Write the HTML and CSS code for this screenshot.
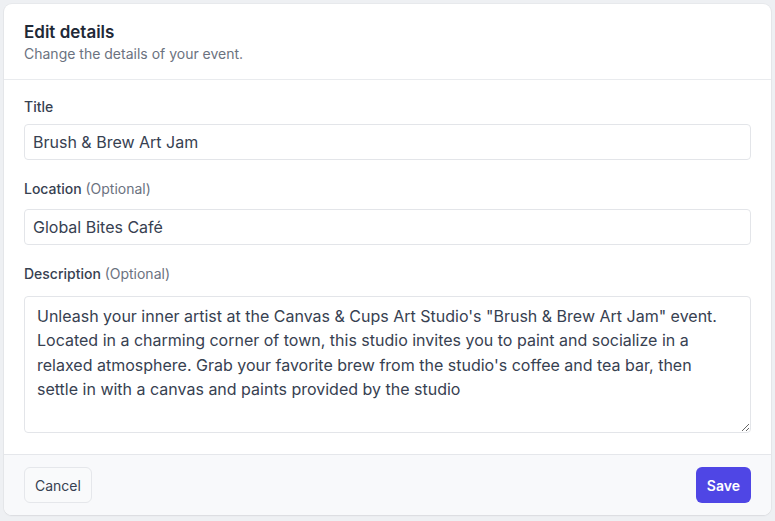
FILE: index.html
```html
<!DOCTYPE html>
<html lang="en">
<head>
<meta charset="utf-8">
<title>Edit details</title>
<link rel="stylesheet" href="styles.css">
</head>
<body>
<form class="card">
  <header class="card-header">
    <h1 class="card-title">Edit details</h1>
    <p class="card-subtitle">Change the details of your event.</p>
  </header>
  <div class="card-body">
    <div class="field">
      <label class="field-label field-label--tight" for="title">Title</label>
      <input class="text-input" id="title" type="text" value="Brush &amp; Brew Art Jam">
    </div>
    <div class="field">
      <label class="field-label" for="location">Location <span class="optional">(Optional)</span></label>
      <input class="text-input" id="location" type="text" value="Global Bites Café">
    </div>
    <div class="field">
      <label class="field-label field-label--loose" for="description">Description <span class="optional">(Optional)</span></label>
      <textarea class="text-area" id="description">Unleash your inner artist at the Canvas &amp; Cups Art Studio's "Brush &amp; Brew Art Jam" event. Located in a charming corner of town, this studio invites you to paint and socialize in a relaxed atmosphere. Grab your favorite brew from the studio's coffee and tea bar, then settle in with a canvas and paints provided by the studio</textarea>
    </div>
  </div>
  <footer class="card-footer">
    <button type="button" class="btn btn-secondary">Cancel</button>
    <button type="button" class="btn btn-primary">Save</button>
  </footer>
</form>
</body>
</html>
```

FILE: styles.css
```css
* { box-sizing: border-box; }

html, body {
  margin: 0;
  background: #eef0f3;
}

body {
  padding: 4px;
  font-family: Inter, "Noto Sans", sans-serif;
  color: #374151;
}

.card {
  display: flex;
  flex-direction: column;
  background: #ffffff;
  border-radius: 8px;
  box-shadow: 0 1px 2px rgba(16, 24, 40, 0.06), 0 0 0 1px rgba(16, 24, 40, 0.03);
  overflow: hidden;
}

.card-header {
  padding: 16px 20px 15px;
  border-bottom: 1px solid #e9ebee;
}

.card-title {
  margin: 0;
  font-size: 17px;
  line-height: 24px;
  font-weight: 600;
  color: #1f2937;
}

.card-subtitle {
  margin: 0;
  font-size: 14px;
  line-height: 20px;
  color: #6b7280;
}

.card-body {
  display: flex;
  flex-direction: column;
  gap: 19px;
  padding: 17px 20px 21px;
}

.field {
  display: flex;
  flex-direction: column;
}

.field-label {
  font-size: 14px;
  line-height: 20px;
  font-weight: 500;
  color: #374151;
  margin-bottom: 10px;
}

.field-label--tight { margin-bottom: 7px; }
.field-label--loose { margin-bottom: 12px; }

.optional {
  font-weight: 400;
  color: #6b7280;
}

.text-input,
.text-area {
  width: 100%;
  border: 1px solid #e3e5e9;
  border-radius: 4px;
  background: #ffffff;
  font-family: Inter, "Noto Sans", sans-serif;
  font-size: 16px;
  color: #374151;
  outline: none;
  margin: 0;
}

.text-input {
  height: 36px;
  padding: 0 8px;
}

.text-area {
  display: block;
  height: 137px;
  padding: 7px 18px 7px 12px;
  line-height: 24.3px;
  resize: vertical;
}

.card-footer {
  display: flex;
  justify-content: space-between;
  align-items: center;
  padding: 12px 20px;
  background: #f8f9fb;
  border-top: 1px solid #e5e7eb;
}

.btn {
  height: 36px;
  border-radius: 6px;
  font-family: Inter, "Noto Sans", sans-serif;
  font-size: 14px;
  cursor: pointer;
}

.btn-secondary {
  padding: 0 10px;
  border: 1px solid #e5e7eb;
  background: #f9fafb;
  color: #374151;
}

.btn-primary {
  padding: 0 11px;
  border: none;
  background: #4f46e5;
  color: #ffffff;
  font-weight: 600;
}
```
